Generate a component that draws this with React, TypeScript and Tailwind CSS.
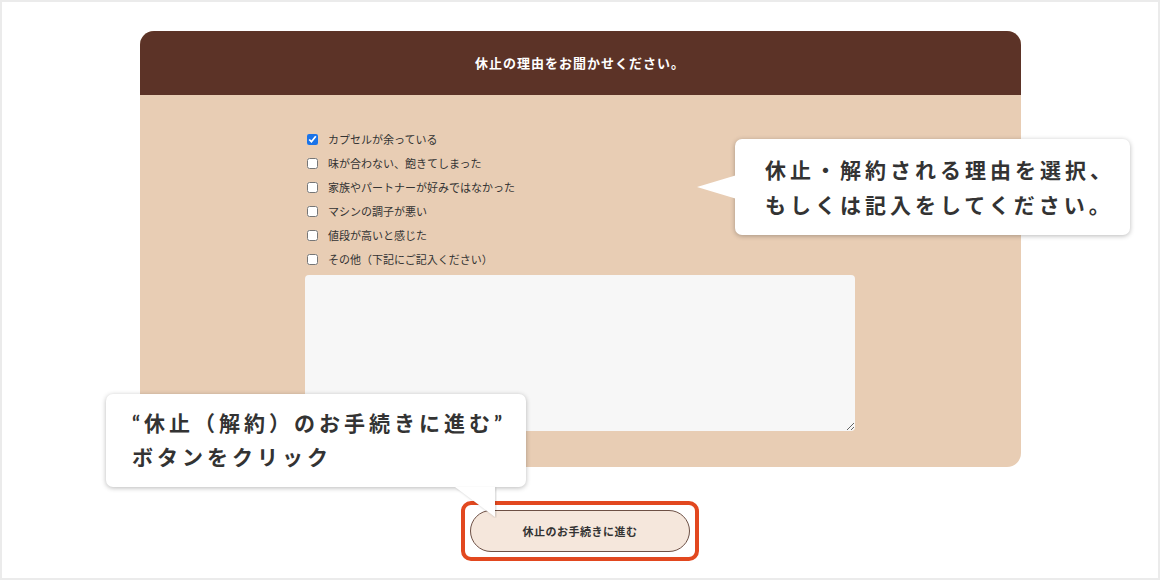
const reasons = [
  { label: "カプセルが余っている", checked: true },
  { label: "味が合わない、飽きてしまった", checked: false },
  { label: "家族やパートナーが好みではなかった", checked: false },
  { label: "マシンの調子が悪い", checked: false },
  { label: "値段が高いと感じた", checked: false },
  { label: "その他（下記にご記入ください）", checked: false },
];

const jp = { fontFamily: '"Noto Sans CJK JP", sans-serif' };
const callout = { fontFamily: 'Lato, "Noto Sans CJK JP", sans-serif' };

export default function App() {
  return (
    <div
      className="relative w-[1160px] h-[580px] border-2 border-[#ebebeb] bg-white text-[#333]"
      style={jp}
    >
      <div className="flex flex-col items-center pt-[29px]">
        {/* CARD */}
        <div className="w-[881px] rounded-[14px] overflow-hidden bg-[#e8cdb4]">
          <div className="h-[64px] bg-[#5c3327] flex items-center justify-center">
            <h2 className="text-white text-[13px] font-bold tracking-[1px]">
              休止の理由をお聞かせください。
            </h2>
          </div>

          <div className="w-[550px] mx-auto pt-[32px] pb-[36px]">
            <ul className="flex flex-col">
              {reasons.map((r) => (
                <li key={r.label} className="h-[24px] flex items-center">
                  <input
                    type="checkbox"
                    defaultChecked={r.checked}
                    className="w-[11px] h-[11px] m-0 ml-[2px] accent-[#1a73e8]"
                  />
                  <span className="ml-[10px] text-[11px] leading-none text-[#333]">
                    {r.label}
                  </span>
                </li>
              ))}
            </ul>
            <textarea
              readOnly
              className="block mt-[4px] w-[550px] h-[156px] rounded-[4px] bg-[#f7f7f7] outline-none"
            />
          </div>
        </div>

        {/* BUTTON */}
        <div className="mt-[34px] rounded-[10px] border-4 border-[#e2481f] p-[5px]">
          <button className="w-[220px] h-[42px] rounded-full border border-[#6d5045] bg-[#f5e7dc] text-[11px] font-bold tracking-[0.5px] text-[#333]">
            休止のお手続きに進む
          </button>
        </div>
      </div>

      {/* CALLOUT: reason */}
      <div
        className="absolute left-[733px] top-[137px] w-[395px] h-[96px] rounded-[7px] bg-white shadow-[0_1px_5px_rgba(0,0,0,0.28)] pl-[30px] pt-[13px]"
        style={callout}
      >
        <svg className="absolute left-[-38px] top-0" width="40" height="96" viewBox="0 0 40 96">
          <polygon points="40,36 0,48 40,60" fill="white" />
        </svg>
        <p className="relative text-[21px] leading-[35px] font-bold tracking-[4px] text-[#333]">
          休止・解約される理由を選択、
          <br />
          もしくは記入をしてください。
        </p>
      </div>

      {/* CALLOUT: button */}
      <div
        className="absolute left-[104px] top-[392px] w-[420px] h-[93px] rounded-[7px] bg-white shadow-[0_1px_5px_rgba(0,0,0,0.28)] pl-[26px] pt-[12px]"
        style={callout}
      >
        <svg className="absolute left-[349px] top-[91px]" width="42" height="33" viewBox="0 0 42 33">
          <polygon points="0,2 40,2 40,32" fill="white" style={{ filter: "drop-shadow(1px 1px 1px rgba(0,0,0,0.18))" }} />
        </svg>
        <p className="relative text-[21px] leading-[34px] font-bold tracking-[4px] text-[#333]">
          “休止（解約）のお手続きに進む”
          <br />
          ボタンをクリック
        </p>
      </div>
    </div>
  );
}
